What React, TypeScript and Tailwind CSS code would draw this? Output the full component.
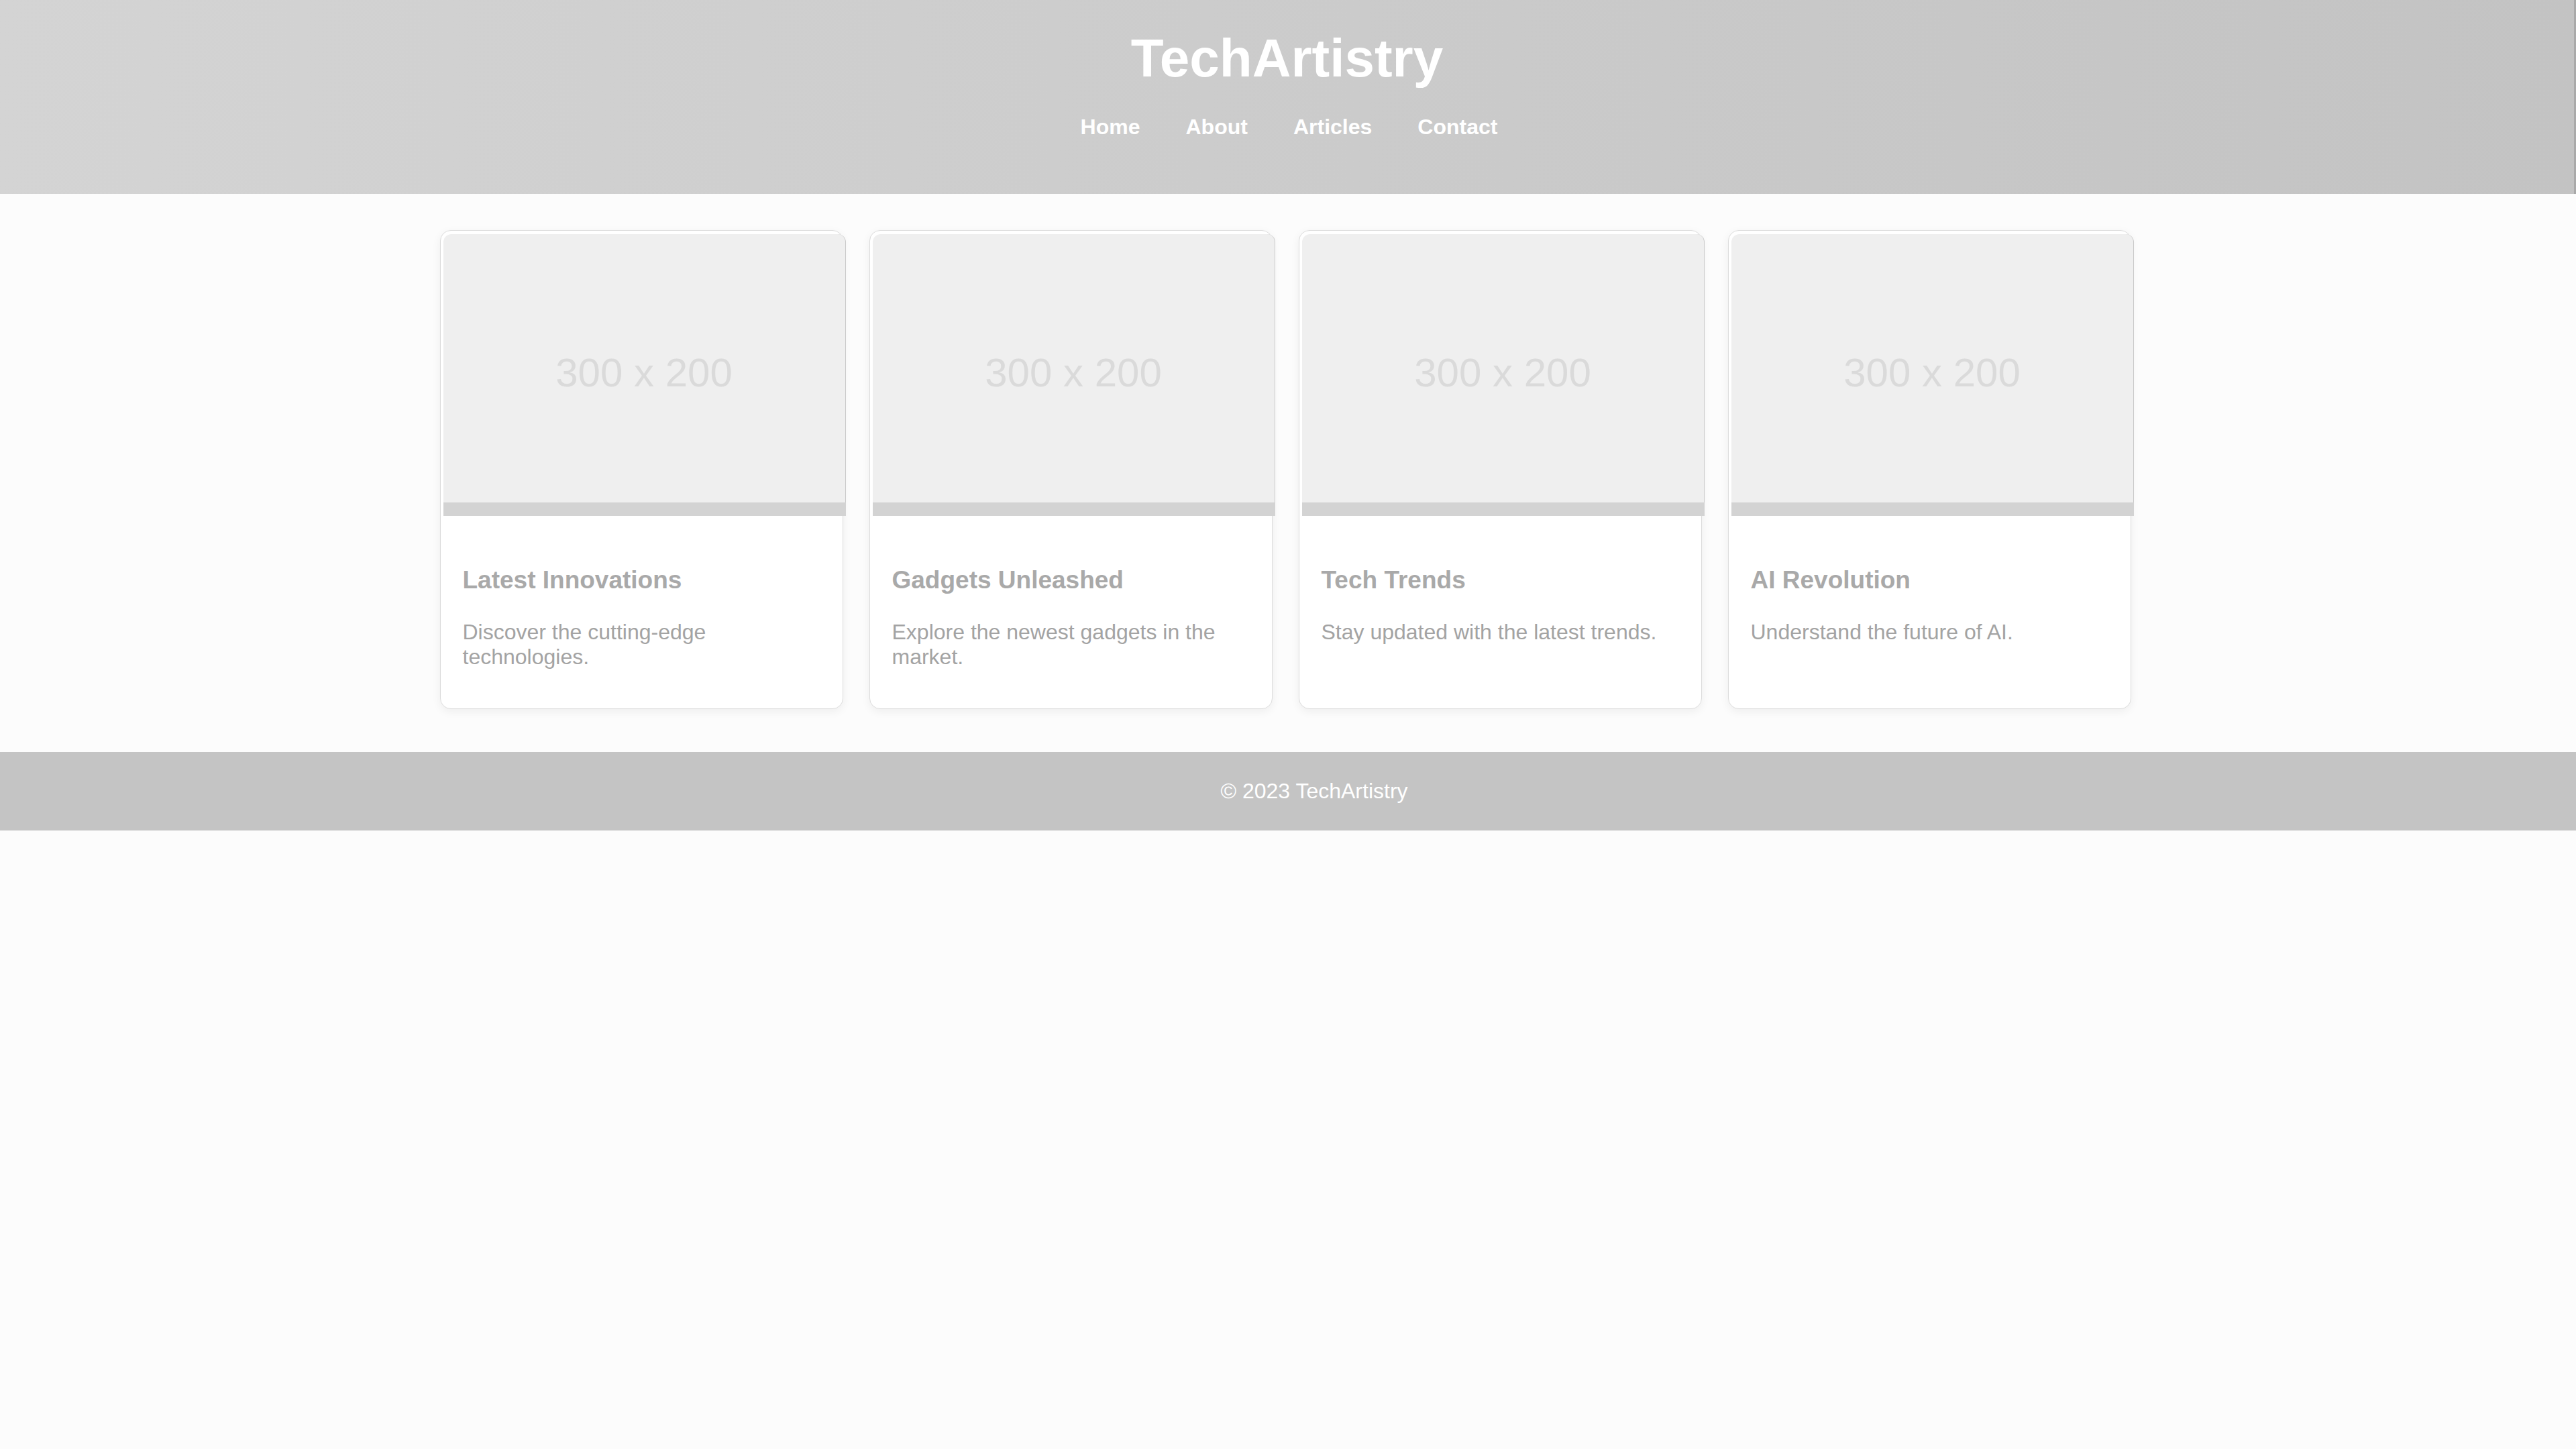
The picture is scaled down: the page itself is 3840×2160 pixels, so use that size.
import React from "react";

const cards = [
  { title: "Latest Innovations", desc: "Discover the cutting-edge technologies." },
  { title: "Gadgets Unleashed", desc: "Explore the newest gadgets in the market." },
  { title: "Tech Trends", desc: "Stay updated with the latest trends." },
  { title: "AI Revolution", desc: "Understand the future of AI." },
];

function Card({ title, desc }: { title: string; desc: string }) {
  return (
    <div className="w-[601px] rounded-[16px] border border-[#dcdcdc] bg-white shadow-[0_4px_14px_rgba(0,0,0,0.06)] flex flex-col">
      <div className="ml-[4px] mt-[5px] w-[600px]">
        <div className="h-[400px] pt-[14px] rounded-t-[12px] bg-[#efefef] border-r border-[#c9c9c9] flex items-center justify-center">
          <span className="text-[60px] text-[#dadada] leading-none">300 x 200</span>
        </div>
        <div className="h-[20px] bg-[#d3d3d3]" />
      </div>
      <div className="pl-[33px] pr-[39px] pt-[75px] pb-[58px]">
        <h3 className="text-[37px] font-bold text-[#a9a9a9] leading-[42px]">{title}</h3>
        <p className="mt-[38px] text-[32px] text-[#a3a3a3] leading-[37px]">{desc}</p>
      </div>
    </div>
  );
}

export default function App() {
  return (
    <div
      className="min-h-screen bg-[#fcfcfc]"
      style={{ fontFamily: '"Liberation Sans", Arial, sans-serif' }}
    >
      <header className="h-[289px] bg-gradient-to-r from-[#d4d4d4] to-[#c3c3c3] border-r-[3px] border-[#a9a9a9] flex flex-col items-center">
        <h1 className="mt-[41px] text-[80px] font-bold text-white leading-[92px]">TechArtistry</h1>
        <nav className="mt-[38px] pl-[6px] flex gap-[68px] text-[32px] font-bold text-white leading-[37px]">
          <a>Home</a>
          <a>About</a>
          <a>Articles</a>
          <a>Contact</a>
        </nav>
      </header>
      <main className="flex justify-center gap-[39px] pt-[54px] pb-[64px] pr-[8px]">
        {cards.map((c) => (
          <Card key={c.title} title={c.title} desc={c.desc} />
        ))}
      </main>
      <footer className="h-[117px] bg-[#c4c4c4] flex items-center justify-center pl-[78px]">
        <p className="text-[32px] text-white leading-[37px]">© 2023 TechArtistry</p>
      </footer>
    </div>
  );
}
